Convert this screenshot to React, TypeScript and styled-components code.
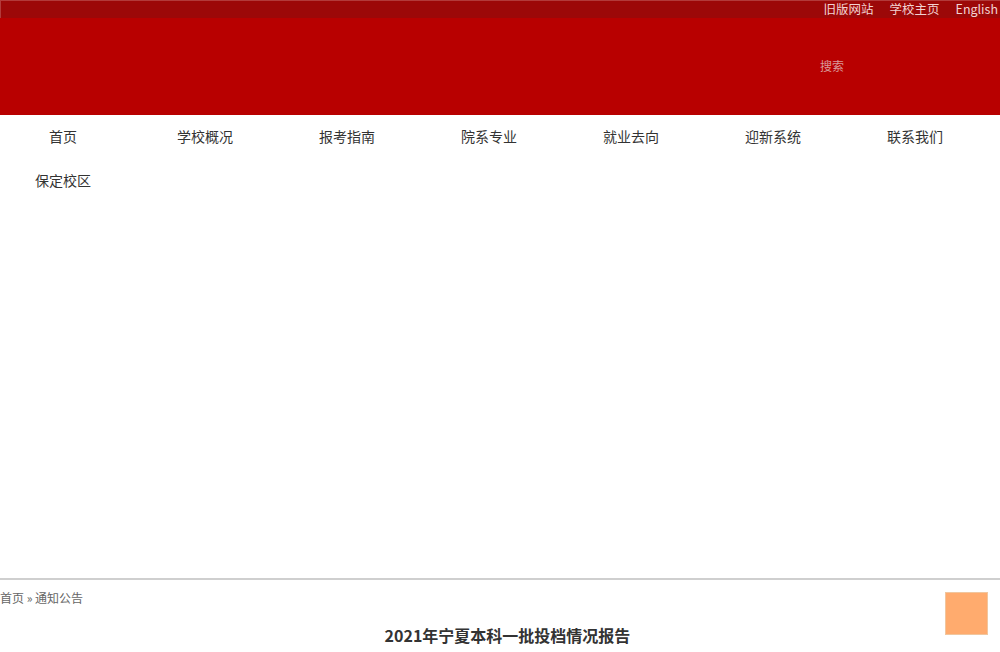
import React from "react";
import styled, { createGlobalStyle } from "styled-components";

const Global = createGlobalStyle`
  html, body { margin: 0; padding: 0; background: #fff; overflow: hidden; }
  body { font-family: "Microsoft YaHei", "Noto Sans CJK SC", sans-serif; }
  * { box-sizing: border-box; }
`;

const Page = styled.div`
  width: 1000px;
  overflow: hidden;
`;

const TopBar = styled.div`
  height: 18px;
  background: #9c0808;
  border-top: 1px solid #b23a3a;
  border-left: 1px solid #b23a3a;
  display: flex;
  justify-content: flex-end;
  align-items: flex-start;
  padding-right: 2px;
`;

const TopLink = styled.a`
  font-size: 12.5px;
  color: #f2d2d2;
  text-decoration: none;
  margin-left: 16px;
  line-height: 16px;
  white-space: nowrap;
`;

const Banner = styled.div`
  height: 97px;
  background: #b80000;
  display: flex;
  align-items: center;
  padding-left: 820px;
  padding-bottom: 2px;
`;

const SearchText = styled.span`
  font-size: 12px;
  color: #d99a9a;
`;

const Nav = styled.ul`
  list-style: none;
  margin: 0;
  padding: 0;
  display: flex;
  flex-wrap: wrap;
`;

const NavItem = styled.li`
  flex: 0 0 142px;
  height: 44px;
  display: flex;
  align-items: center;
  justify-content: center;
  padding-right: 16px;
  padding-bottom: 2px;
  font-size: 14px;
  color: #333;
`;

const Spacer = styled.div`
  height: 375px;
`;

const Rule = styled.div`
  height: 2px;
  background: #cfcfcf;
`;

const Crumb = styled.div`
  margin-top: 10px;
  font-size: 12px;
  color: #666;
  line-height: 16px;
`;

const ContentRow = styled.div`
  position: relative;
`;

const Title = styled.h1`
  margin: 17px 0 0;
  text-align: center;
  font-size: 16px;
  font-weight: bold;
  color: #333;
  padding-left: 15px;
`;

const TopButton = styled.div`
  position: absolute;
  right: 12px;
  top: 14px;
  width: 43px;
  height: 43px;
  background: #ffab6e;
  border: 1px solid #f1c69e;
`;

const navs = ["首页", "学校概况", "报考指南", "院系专业", "就业去向", "迎新系统", "联系我们", "保定校区"];

export default function App() {
  return (
    <Page>
      <Global />
      <TopBar>
        <TopLink>旧版网站</TopLink>
        <TopLink>学校主页</TopLink>
        <TopLink>English</TopLink>
      </TopBar>
      <Banner>
        <SearchText>搜索</SearchText>
      </Banner>
      <Nav>
        {navs.map((n) => (
          <NavItem key={n}>{n}</NavItem>
        ))}
      </Nav>
      <Spacer />
      <ContentRow>
        <Rule />
        <Crumb>首页 » 通知公告</Crumb>
        <Title>2021年宁夏本科一批投档情况报告</Title>
        <TopButton />
      </ContentRow>
    </Page>
  );
}
